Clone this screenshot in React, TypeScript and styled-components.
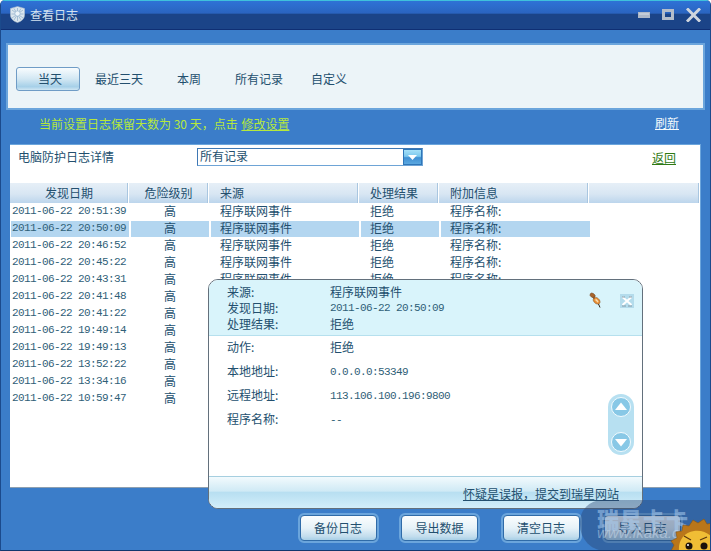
import React from "react";
import styled, { createGlobalStyle } from "styled-components";

const Global = createGlobalStyle`
  html, body { margin: 0; padding: 0; overflow: hidden; }
  body { font-family: "Noto Sans CJK SC", "Liberation Sans", sans-serif; font-size: 12px; color: #234f6e; }
  * { box-sizing: border-box; }
`;

const Window = styled.div`
  position: relative;
  width: 711px;
  height: 551px;
  overflow: hidden;
  display: flex;
  flex-direction: column;
  background: #3b7dc9;
  border-left: 1px solid #1b4a8c;
  border-right: 1px solid #1b4a8c;
  border-bottom: 1px solid #12376e;
  border-radius: 5px 5px 0 0;
`;

const TitleBar = styled.div`
  height: 30px;
  flex: none;
  display: flex;
  align-items: center;
  padding: 0 9px 1px 9px;
  border-top: 1px solid #3fc0dc;
  border-bottom: 1px solid #0f2f74;
  background: linear-gradient(#2e72d6 0%, #2a64c0 44%, #1b4488 46%, #1b4488 100%);
`;

const Title = styled.span`
  margin-left: 5px;
  color: #d3e2f0;
  font-size: 12px;
  line-height: 14px;
  flex: 1;
`;

const Controls = styled.div`
  display: flex;
  align-items: center;
  gap: 12px;
`;

const TopPanel = styled.div`
  flex: none;
  height: 67px;
  margin: 13px 5px 0 5px;
  border: 2px solid #6ba5dc;
  background: #ecf4f8;
  display: flex;
  align-items: center;
  padding: 4px 0 0 8px;
`;

const Tab = styled.div<{ $active?: boolean }>`
  width: ${(p) => (p.$active ? "64px" : "70px")};
  margin-right: ${(p) => (p.$active ? "4px" : "0")};
  height: 24px;
  display: flex;
  align-items: center;
  justify-content: center;
  padding-left: ${(p) => (p.$active ? "4px" : "0")};
  color: #234f6e;
  line-height: 14px;
  border-radius: 3px;
  ${(p) =>
    p.$active
      ? `border: 1px solid #6f9cc6; background: linear-gradient(#f8fcfe 0%, #d2e7f3 50%, #a6d0e8 85%, #cfe6f3 100%);`
      : ``}
`;

const NoticeRow = styled.div`
  flex: none;
  height: 34px;
  display: flex;
  align-items: flex-start;
  justify-content: space-between;
  padding: 7px 31px 0 38px;
`;

const Notice = styled.div`
  color: #b6e83c;
  line-height: 14px;
  white-space: pre;
`;

const NoticeLink = styled.span`
  margin-left: 1px;
  text-decoration: underline;
`;

const Refresh = styled.span`
  color: #f2f8fc;
  text-decoration: underline;
  line-height: 16px;
  margin-top: -2px;
`;

const MainPanel = styled.div`
  flex: none;
  height: 344px;
  margin: 0 9px;
  background: #fff;
  border-top: 1px solid #6ba5dc;
  border-right: 1px solid #6ba5dc;
  border-bottom: 1px solid #8d9fb0;
  display: flex;
  flex-direction: column;
`;

const DetailRow = styled.div`
  height: 38px;
  flex: none;
  display: flex;
  align-items: flex-start;
  padding: 3px 24px 0 8px;
`;

const DetailLabel = styled.span`
  width: 179px;
  line-height: 14px;
  margin-top: 2px;
`;

const Select = styled.div`
  width: 226px;
  height: 18px;
  display: flex;
  border: 1px solid #6ea4d6;
  border-top-color: #3f78b4;
  border-left-color: #3f78b4;
  background: #fff;
`;

const SelectValue = styled.span`
  flex: 1;
  padding-left: 2px;
  line-height: 13px;
`;

const SelectArrow = styled.span`
  width: 19px;
  display: flex;
  align-items: center;
  justify-content: center;
  border: 1px solid #2f76b8;
  background: linear-gradient(#a5e0f8 0%, #7cc8ee 45%, #3f90d4 55%, #5ba8e0 100%);
`;

const BackLink = styled.span`
  margin-left: auto;
  color: #2f7a14;
  text-decoration: underline;
  line-height: 16px;
  margin-top: 2px;
`;

const HeaderRow = styled.div`
  flex: none;
  height: 20px;
  display: flex;
  background: #fff;
`;

const cols = [119, 80, 150, 80, 150];

const HeaderCell = styled.div<{ $w?: number; $left?: boolean }>`
  ${(p) => (p.$w ? `width: ${p.$w}px;` : "flex: 1;")}
  border-right: 1px solid #fff;
  box-shadow: inset -1px 0 0 #a9c6e0;
  background: linear-gradient(#e6eff7 0%, #d8e6f3 55%, #bcd5ec 100%);
  text-align: ${(p) => (p.$left ? "left" : "center")};
  padding-left: ${(p) => (p.$left ? "11px" : "0")};
  line-height: 19px;
`;

const Rows = styled.div`
  flex: 1;
  padding: 1px 110px 0 1px;
`;

const Row = styled.div`
  height: 17px;
  display: flex;
  gap: 2px;
  padding-bottom: 1px;
`;

const Cell = styled.div<{ $w: number; $sel?: boolean; $center?: boolean }>`
  width: ${(p) => p.$w}px;
  height: 16px;
  line-height: 14px;
  white-space: nowrap;
  text-align: ${(p) => (p.$center ? "center" : "left")};
  background: ${(p) => (p.$sel ? "#b3d6f0" : "transparent")};
  padding-left: ${(p) => (p.$center ? "0" : "9px")};
`;

const DateCell = styled(Cell)`
  padding-left: 1px;
  line-height: 15px;
  font-family: "Liberation Mono", monospace;
  font-size: 11px;
  letter-spacing: -0.6px;
  color: #2f6078;
`;

const Footer = styled.div`
  flex: 1;
  display: flex;
  gap: 20.5px;
  padding: 25px 0 0 296.5px;
`;

const ActionButton = styled.div`
  width: 81px;
  height: 30px;
  border: 2px solid #6ba5dc;
  border-radius: 6px;
  background: #6ba5dc;
  display: flex;
`;

const ActionInner = styled.div`
  flex: 1;
  display: flex;
  align-items: center;
  justify-content: center;
  border: 1px solid #2f6ba8;
  border-radius: 4px;
  line-height: 14px;
  background: linear-gradient(#fbfdfe 0%, #e6f2f8 50%, #c2dded 85%, #a8cfe6 100%);
`;

const Popup = styled.div`
  position: absolute;
  left: 207px;
  top: 279px;
  width: 435px;
  height: 230px;
  background: #fff;
  border: 1px solid #63707c;
  border-radius: 10px;
  overflow: hidden;
  display: flex;
  flex-direction: column;
`;

const PopupHeader = styled.div`
  position: relative;
  flex: none;
  height: 56px;
  background: #d9f4fb;
  border-bottom: 1px solid #b6e0ee;
  padding: 4px 0 0 18px;
`;

const PopupHeadRow = styled.div`
  height: 16px;
  display: flex;
  line-height: 16px;
`;

const PopupLabel = styled.span`
  width: 103px;
  flex: none;
`;

const Mono = styled.span`
  font-family: "Liberation Mono", monospace;
  font-size: 11px;
  letter-spacing: -0.6px;
  color: #2f6078;
`;

const PinIcon = styled.svg`
  position: absolute;
  left: 380px;
  top: 12px;
`;

const CloseBox = styled.div`
  position: absolute;
  left: 411px;
  top: 14px;
  width: 14px;
  height: 14px;
  background: #b4dcec;
`;

const PopupBody = styled.div`
  flex: 1;
  padding: 0 0 0 18px;
`;

const PopupRow = styled.div`
  height: 24px;
  display: flex;
  align-items: center;
`;

const RowLabel = styled(PopupLabel)`
  padding-bottom: 4px;
`;

const RowValue = styled.span`
  padding-bottom: 4px;
`;

const PopupFooter = styled.div`
  flex: none;
  height: 32px;
  border-top: 1px solid #a6cfe0;
  background: linear-gradient(#f2fafd 0%, #d0eaf5 45%, #b8dff1 50%, #d2eefa 100%);
  text-align: right;
  padding: 9px 23px 0 0;
  line-height: 15px;
`;

const FooterLink = styled.span`
  text-decoration: underline;
`;

const Scroller = styled.div`
  position: absolute;
  left: 399px;
  top: 114px;
  width: 26px;
  height: 61px;
  border-radius: 13px;
  background: #b7e0f1;
  display: flex;
  flex-direction: column;
  justify-content: space-between;
  align-items: center;
  padding: 3px 0;
`;

const Watermark = styled.div`
  position: absolute;
  left: 579px;
  top: 500px;
  width: 132px;
  height: 51px;
  background: rgba(40, 70, 115, 0.42);
  border-radius: 22px 0 0 26px;
`;

const WaterTitle = styled.div`
  position: absolute;
  left: 17px;
  top: 4px;
  color: rgba(170, 205, 240, 0.55);
  font-size: 22px;
  font-weight: 900;
  line-height: 28px;
  white-space: nowrap;
  letter-spacing: 1px;
`;

const WaterUrl = styled.div`
  position: absolute;
  left: 17px;
  top: 24px;
  color: rgba(215, 230, 245, 0.45);
  font-family: "Liberation Sans", sans-serif;
  font-size: 15px;
  font-style: italic;
  line-height: 18px;
  white-space: nowrap;
`;

const Lion = styled.svg`
  position: absolute;
  left: 89px;
  top: 17px;
`;

const rows = [
  "20:51:39", "20:50:09", "20:46:52", "20:45:22", "20:43:31", "20:41:48",
  "20:41:22", "19:49:14", "19:49:13", "13:52:22", "13:34:16", "10:59:47",
];

const ShieldLogo = () => (
  <svg width="15" height="17" viewBox="0 0 15 17">
    <path d="M7.5 .5 14.5 2.5V9C14.5 13 11 15.5 7.5 16.5 4 15.5 .5 13 .5 9V2.5Z" fill="#dbe6ee" stroke="#aebfce" strokeWidth=".6" />
    <path d="M2 4 13 12M13 4 2 12M7.5 2V15M1.5 8H13.5M4 2.5 11 14M11 2.5 4 14" stroke="#7fa3c2" strokeWidth=".6" />
    <circle cx="7.5" cy="7.5" r="2.6" fill="#eef5fa" stroke="#8fb0cc" strokeWidth=".6" />
  </svg>
);

const MinIcon = () => (
  <svg width="12" height="6" viewBox="0 0 12 6" style={{ display: "block" }}>
    <rect x="0" y="0" width="12" height="6" fill="#aeb8c8" />
    <rect x="1" y="1" width="10" height="2" fill="#c4ccd8" />
  </svg>
);
const MaxIcon = () => (
  <svg width="12" height="11" viewBox="0 0 12 11" style={{ display: "block" }}>
    <path d="M0 0H12V11H0ZM3 3V8H9V3Z" fillRule="evenodd" fill="#b4bdcb" />
  </svg>
);
const CloseIcon = () => (
  <svg width="15" height="14" viewBox="0 0 15 14" style={{ display: "block" }}>
    <path d="M2 1.5 13 12.5M13 1.5 2 12.5" stroke="#d0d6de" strokeWidth="3" strokeLinecap="square" />
  </svg>
);

const RoundArrow = ({ up }: { up?: boolean }) => (
  <svg width="20" height="20" viewBox="0 0 20 20">
    <circle cx="10" cy="10" r="9.5" fill="#88c8e6" stroke="#f2fafd" strokeWidth="1" />
    {up ? <path d="M10 5.5 16 13H4Z" fill="#fff" /> : <path d="M10 14.5 16 7H4Z" fill="#fff" />}
  </svg>
);

export default function App() {
  return (
    <>
      <Global />
      <Window>
        <TitleBar>
          <ShieldLogo />
          <Title>查看日志</Title>
          <Controls>
            <MinIcon />
            <MaxIcon />
            <CloseIcon />
          </Controls>
        </TitleBar>
        <TopPanel>
          <Tab $active>当天</Tab>
          <Tab>最近三天</Tab>
          <Tab>本周</Tab>
          <Tab>所有记录</Tab>
          <Tab>自定义</Tab>
        </TopPanel>
        <NoticeRow>
          <Notice>
            当前设置日志保留天数为 30 天，点击 <NoticeLink>修改设置</NoticeLink>
          </Notice>
          <Refresh>刷新</Refresh>
        </NoticeRow>
        <MainPanel>
          <DetailRow>
            <DetailLabel>电脑防护日志详情</DetailLabel>
            <Select>
              <SelectValue>所有记录</SelectValue>
              <SelectArrow>
                <svg width="9" height="5" viewBox="0 0 9 5">
                  <path d="M0 0H9L4.5 5Z" fill="#fff" />
                </svg>
              </SelectArrow>
            </Select>
            <BackLink>返回</BackLink>
          </DetailRow>
          <HeaderRow>
            <HeaderCell $w={cols[0]}>发现日期</HeaderCell>
            <HeaderCell $w={cols[1]}>危险级别</HeaderCell>
            <HeaderCell $w={cols[2]} $left>来源</HeaderCell>
            <HeaderCell $w={cols[3]} $left>处理结果</HeaderCell>
            <HeaderCell $w={cols[4]} $left>附加信息</HeaderCell>
            <HeaderCell />
          </HeaderRow>
          <Rows>
            {rows.map((t, i) => {
              const sel = i === 1;
              return (
                <Row key={t + i}>
                  <DateCell $w={118} $sel={sel}>2011-06-22 {t}</DateCell>
                  <Cell $w={78} $sel={sel} $center>高</Cell>
                  <Cell $w={148} $sel={sel}>程序联网事件</Cell>
                  <Cell $w={78} $sel={sel}>拒绝</Cell>
                  <Cell $w={149} $sel={sel}>程序名称:</Cell>
                </Row>
              );
            })}
          </Rows>
        </MainPanel>
        <Footer>
          {["备份日志", "导出数据", "清空日志", "导入日志"].map((l) => (
            <ActionButton key={l}>
              <ActionInner>{l}</ActionInner>
            </ActionButton>
          ))}
        </Footer>
        <Popup>
          <PopupHeader>
            <PopupHeadRow><PopupLabel>来源:</PopupLabel>程序联网事件</PopupHeadRow>
            <PopupHeadRow><PopupLabel>发现日期:</PopupLabel><Mono>2011-06-22 20:50:09</Mono></PopupHeadRow>
            <PopupHeadRow><PopupLabel>处理结果:</PopupLabel>拒绝</PopupHeadRow>
            <PinIcon width="14" height="16" viewBox="0 0 14 16">
              <path d="M5 6C7 4.5 9 6 10.5 8 11.5 10 11 11.5 9.5 12 7.5 12.5 5.5 11 4.5 9 4 8 4.2 6.8 5 6Z" fill="#e88f35" stroke="#8c5322" strokeWidth=".6" />
              <path d="M6.5 7.5C7.5 8 8.5 9 9 10.2" stroke="#fbdcae" strokeWidth="1.4" fill="none" />
              <ellipse cx="3.6" cy="3.4" rx="2.8" ry="2" transform="rotate(35 3.6 3.4)" fill="#a9652c" stroke="#6e4520" strokeWidth=".5" />
              <path d="M4 5 5.5 6.5" stroke="#8c5322" strokeWidth="1.6" />
              <path d="M9.5 12 11 15.5" stroke="#2e2418" strokeWidth="1" />
            </PinIcon>
            <CloseBox>
              <svg width="14" height="14" viewBox="0 0 14 14" style={{ display: "block" }}>
                <path d="M2.5 3 11.5 11M11.5 3 2.5 11" stroke="#fff" strokeWidth="2" />
                <path d="M2 12H6M8 12H12M2 3H5M9 3H12" stroke="#7b8c98" strokeWidth=".8" />
              </svg>
            </CloseBox>
          </PopupHeader>
          <PopupBody>
            <PopupRow><RowLabel>动作:</RowLabel><RowValue>拒绝</RowValue></PopupRow>
            <PopupRow><RowLabel>本地地址:</RowLabel><Mono>0.0.0.0:53349</Mono></PopupRow>
            <PopupRow><RowLabel>远程地址:</RowLabel><Mono>113.106.100.196:9800</Mono></PopupRow>
            <PopupRow><RowLabel>程序名称:</RowLabel><Mono>--</Mono></PopupRow>
          </PopupBody>
          <Scroller>
            <RoundArrow up />
            <RoundArrow />
          </Scroller>
          <PopupFooter>
            <FooterLink>怀疑是误报，提交到瑞星网站</FooterLink>
          </PopupFooter>
        </Popup>
        <Watermark>
          <WaterTitle>瑞星卡卡</WaterTitle>
          <WaterUrl>www.ikaka.com</WaterUrl>
          <Lion width="43" height="34" viewBox="0 0 43 34">
            <path d="M2 34 5 28 2 24 8 21 7 15 13 14 14 8 20 9 24 3 29 6 35 2 38 7 43 6V34Z" fill="#b9761a" stroke="#8c5510" strokeWidth=".6" />
            <path d="M10 34C9 24 15 15 25 14 33 13 39 16 43 20V34Z" fill="#f0bd35" />
            <circle cx="20" cy="29" r="3.5" fill="#1c120a" />
            <circle cx="35" cy="29" r="3.5" fill="#1c120a" />
            <circle cx="19" cy="28" r="1" fill="#fff" />
            <path d="M15 19 22 23M31 23 38 20" stroke="#5a3510" strokeWidth="1.2" />
          </Lion>
        </Watermark>
      </Window>
    </>
  );
}
